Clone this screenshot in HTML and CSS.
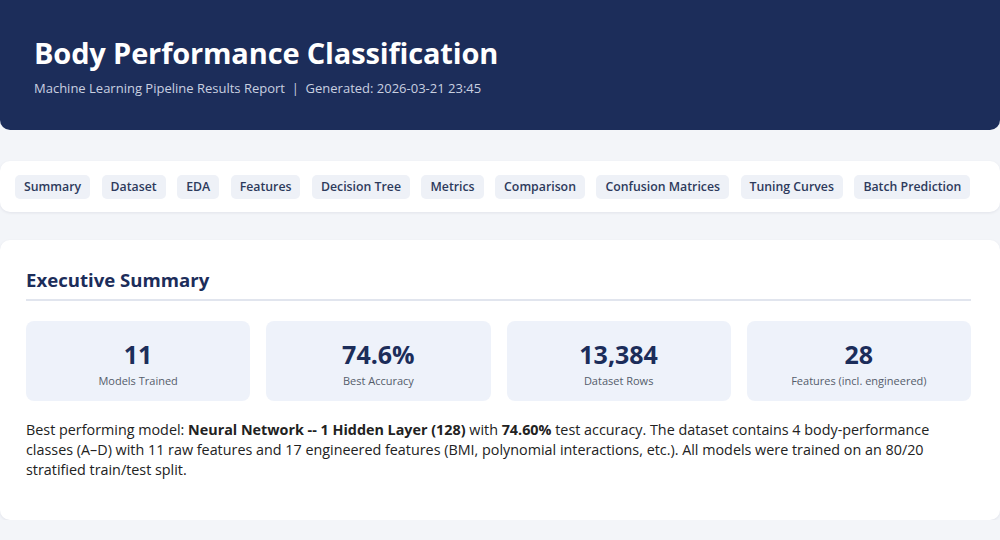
FILE: index.html
```html
<!DOCTYPE html>
<html lang="en">
<head>
  <meta charset="UTF-8">
  <meta name="viewport" content="width=device-width, initial-scale=1.0">
  <title>Body Performance Classification</title>
  <link rel="stylesheet" href="styles.css">
</head>
<body>
<div class="container">
  <div class="header">
    <h1>Body Performance Classification</h1>
    <div class="subtitle">Machine Learning Pipeline Results Report &nbsp;|&nbsp; Generated: 2026-03-21 23:45</div>
  </div>

  <div class="nav">
    <a href="#summary">Summary</a>
    <a href="#dataset">Dataset</a>
    <a href="#eda">EDA</a>
    <a href="#features">Features</a>
    <a href="#tree">Decision Tree</a>
    <a href="#metrics">Metrics</a>
    <a href="#comparison">Comparison</a>
    <a href="#confusion">Confusion Matrices</a>
    <a href="#tuning">Tuning Curves</a>
    <a href="#batch">Batch Prediction</a>
  </div>

  <div class="section" id="summary">
    <h2>Executive Summary</h2>
    <div class="stats">
      <div class="stat">
        <div class="stat-value">11</div>
        <div class="stat-label">Models Trained</div>
      </div>
      <div class="stat">
        <div class="stat-value">74.6%</div>
        <div class="stat-label">Best Accuracy</div>
      </div>
      <div class="stat">
        <div class="stat-value">13,384</div>
        <div class="stat-label">Dataset Rows</div>
      </div>
      <div class="stat">
        <div class="stat-value">28</div>
        <div class="stat-label">Features (incl. engineered)</div>
      </div>
    </div>
    <p>Best performing model: <b>Neural Network -- 1 Hidden Layer (128)</b> with <b>74.60%</b> test accuracy. The dataset contains 4 body-performance classes (A&ndash;D) with 11 raw features and 17 engineered features (BMI, polynomial interactions, etc.). All models were trained on an 80/20 stratified train/test split.</p>
  </div>
</div>
</body>
</html>
```

FILE: styles.css
```css
body {
  font-family: 'Open Sans', 'Noto Sans', sans-serif;
  background-color: #f3f5f9;
  margin: 0;
  padding: 0;
  color: #222;
}
.container {
  width: 1000px;
  margin: 0 auto;
}
.header {
  background-color: #1c2d5a;
  color: #fff;
  padding: 34px 34px 0;
  height: 96px;
  border-radius: 0 0 10px 10px;
}
.header h1 {
  margin: 0;
  font-size: 29px;
  font-weight: 700;
  letter-spacing: -0.15px;
  line-height: 38px;
}
.subtitle {
  font-size: 13px;
  color: #c9d0e0;
  margin-top: 7px;
}
.nav {
  background-color: #fff;
  margin-top: 31px;
  border-radius: 10px;
  box-shadow: 0 1px 3px rgba(20, 30, 60, 0.08);
  padding: 14px 15px 13px;
  display: flex;
  gap: 11.5px;
}
.nav a {
  background-color: #eef1f7;
  color: #2d3a5c;
  text-decoration: none;
  font-size: 12.3px;
  font-weight: 600;
  padding: 3px 9px;
  border-radius: 5px;
  line-height: 18px;
}
.section {
  background-color: #fff;
  margin-top: 28px;
  border-radius: 10px;
  box-shadow: 0 1px 3px rgba(20, 30, 60, 0.08);
  padding: 26px 29px 40px 26px;
  height: 214px;
}
.section h2 {
  margin: 0;
  font-size: 18.6px;
  font-weight: 700;
  color: #1c2d5a;
  line-height: 28px;
  padding-bottom: 5px;
  border-bottom: 2px solid #e1e5ee;
}
.stats {
  display: grid;
  grid-template-columns: repeat(4, 1fr);
  gap: 16px;
  margin-top: 20px;
}
.stat {
  background-color: #eef2fa;
  border-radius: 8px;
  height: 80px;
  box-sizing: border-box;
  padding-top: 3px;
  display: flex;
  flex-direction: column;
  align-items: center;
  justify-content: center;
}
.stat-value {
  font-size: 25px;
  font-weight: 700;
  color: #1c2d5a;
  line-height: 32px;
}
.stat-label {
  font-size: 11px;
  color: #555d6b;
  margin-top: 3px;
}
.section p {
  margin: 19px 0 0;
  font-size: 14.35px;
  line-height: 20px;
  color: #222;
}
```
